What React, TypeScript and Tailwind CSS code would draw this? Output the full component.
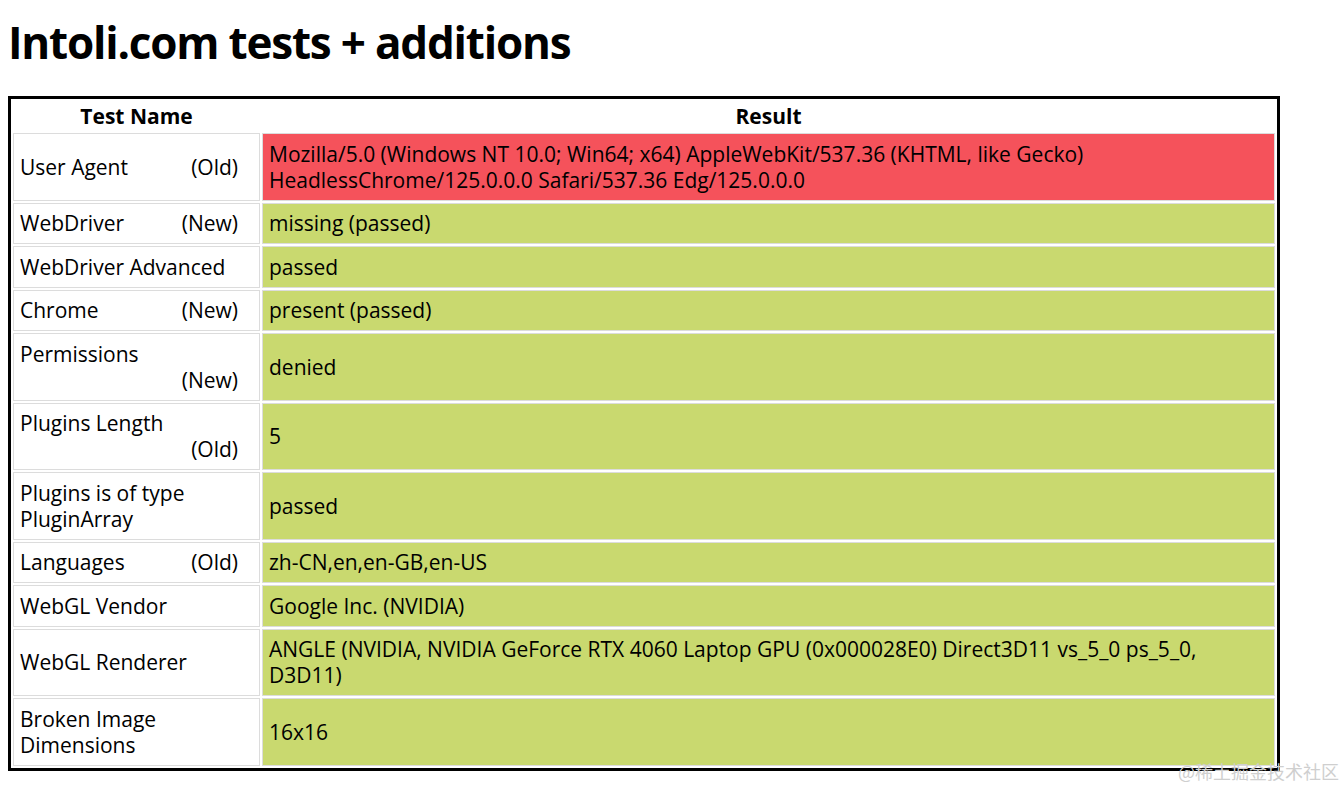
import React from "react";

interface Row {
  name: string;
  tag?: string;
  wrapTag?: boolean;
  result: string;
  failed?: boolean;
}

const rows: Row[] = [
  {
    name: "User Agent",
    tag: "(Old)",
    result:
      "Mozilla/5.0 (Windows NT 10.0; Win64; x64) AppleWebKit/537.36 (KHTML, like Gecko) HeadlessChrome/125.0.0.0 Safari/537.36 Edg/125.0.0.0",
    failed: true,
  },
  { name: "WebDriver", tag: "(New)", result: "missing (passed)" },
  { name: "WebDriver Advanced", result: "passed" },
  { name: "Chrome", tag: "(New)", result: "present (passed)" },
  { name: "Permissions", tag: "(New)", wrapTag: true, result: "denied" },
  { name: "Plugins Length", tag: "(Old)", wrapTag: true, result: "5" },
  { name: "Plugins is of type PluginArray", result: "passed" },
  { name: "Languages", tag: "(Old)", result: "zh-CN,en,en-GB,en-US" },
  { name: "WebGL Vendor", result: "Google Inc. (NVIDIA)" },
  {
    name: "WebGL Renderer",
    result:
      "ANGLE (NVIDIA, NVIDIA GeForce RTX 4060 Laptop GPU (0x000028E0) Direct3D11 vs_5_0 ps_5_0, D3D11)",
  },
  { name: "Broken Image Dimensions", result: "16x16" },
];

const NameCell: React.FC<{ row: Row }> = ({ row }) => {
  if (!row.tag) return <span>{row.name}</span>;
  if (row.wrapTag) {
    return (
      <div className="flex flex-col">
        <span>{row.name}</span>
        <span className="self-end">{row.tag}</span>
      </div>
    );
  }
  return (
    <div className="flex justify-between">
      <span>{row.name}</span>
      <span>{row.tag}</span>
    </div>
  );
};

const App: React.FC = () => {
  return (
    <div
      className="min-h-screen bg-white text-black px-2 pt-[14px]"
      style={{ fontFamily: '"Open Sans", "Noto Sans", sans-serif' }}
    >
      <h1 className="text-[44px] font-bold leading-[56px] mb-[26px] tracking-[-1.2px]">
        Intoli.com tests + additions
      </h1>
      <table className="w-[1272px] border-[3px] border-black border-separate border-spacing-[2px] text-[21px] leading-[26px]">
        <thead>
          <tr>
            <th className="w-[247px] font-bold py-[2px]">Test Name</th>
            <th className="font-bold py-[2px]">Result</th>
          </tr>
        </thead>
        <tbody>
          {rows.map((row, i) => (
            <tr key={i}>
              <td className="border border-[#dcdcdc] bg-white pl-[6px] pr-[21px] py-[6.75px] align-middle">
                <NameCell row={row} />
              </td>
              <td
                className={
                  "border border-[#dcdcdc] px-[6px] py-[6.75px] align-middle " +
                  (row.failed ? "bg-[#f5525b]" : "bg-[#c9d96f]")
                }
              >
                {row.result}
              </td>
            </tr>
          ))}
        </tbody>
      </table>
      <div
        className="absolute left-[1178px] top-[758px] text-[18px] text-[#cfcfcf]"
        style={{ fontFamily: '"Noto Sans CJK SC", sans-serif' }}
      >
        @稀土掘金技术社区
      </div>
    </div>
  );
};

export default App;
